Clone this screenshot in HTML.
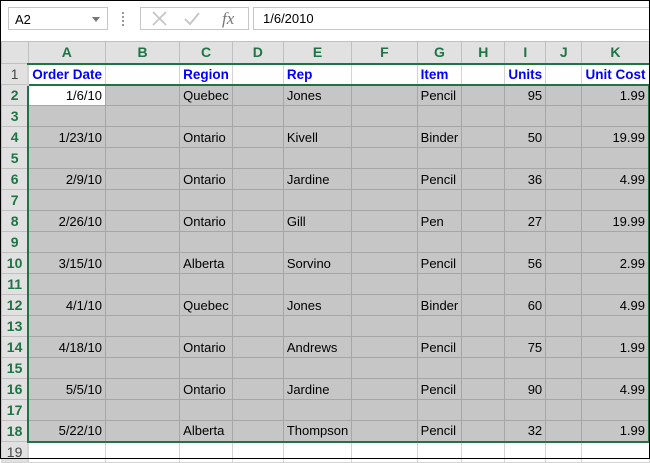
<!DOCTYPE html><html><head><style>
body{margin:0;width:650px;height:459px;overflow:hidden;background:#fff;font-family:"Liberation Sans",Arial,sans-serif;position:relative}
.frame{position:absolute;left:0;top:0;width:648px;height:457px;border:1px solid #000}
.fb{position:absolute;top:0;left:1px;width:648px;height:38px;background:#fff}
.nb{position:absolute;left:7px;top:7px;width:100px;height:23px;border:1px solid #c6c6c6;font-size:13px;line-height:23px;box-sizing:border-box;padding-left:6px}
.nb:after{content:"";position:absolute;right:7px;top:9px;border:4px solid transparent;border-top:5px solid #777}
.dots{position:absolute;left:121px;top:12px;width:2px;height:14px;background:repeating-linear-gradient(#999 0 2px,transparent 2px 4px)}
.ic{position:absolute;left:139px;top:7px;width:109px;height:23px;border:1px solid #c6c6c6;box-sizing:border-box}
.fx{position:absolute;left:252px;top:7px;width:398px;height:23px;border:1px solid #c6c6c6;box-sizing:border-box;font-size:13px;line-height:22px;padding-left:9px}
table{position:absolute;left:1px;top:41px;border-collapse:collapse;table-layout:fixed;font-size:13px}
td{height:20px;border:1px solid #a6a6a6;background:#c6c6c6;padding:0 3px;white-space:nowrap;overflow:hidden;box-sizing:border-box}
tr.h td{background:#e1e1e1;color:#217346;font-weight:bold;text-align:center;font-size:14px;border-color:#c0c0c0;border-bottom:2px solid #217346}
td.rh{background:#e1e1e1;color:#217346;font-weight:bold;text-align:center;font-size:14px;border-color:#c0c0c0;border-right:2px solid #217346;padding:0}
tr.r1 td{background:#fff;color:#0000ff;font-weight:bold;font-size:13.5px;border-color:#d4d4d4;border-bottom:2px solid #217346}
tr.r1 td.rh{background:#e1e1e1;color:#444;font-weight:normal;border-bottom:1px solid #c0c0c0}
tr.r19 td{background:#fff;border-color:#d4d4d4;border-top:2px solid #217346}
tr.r19 td.rh{background:#e1e1e1;color:#444;font-weight:normal;border-top:1px solid #c0c0c0}
.n{text-align:right}
td.act{background:#fff}
td.k{border-right:2px solid #217346}
</style></head><body>
<div class="fb">
<div class="nb">A2</div><div class="dots"></div>
<div class="ic"><svg width="107" height="21" style="position:absolute;left:0;top:0"><path d="M12 4l13 13M25 4L12 17" stroke="#c4c4c4" stroke-width="1.6" fill="none"/><path d="M44 11l5 5 9-11" stroke="#c4c4c4" stroke-width="1.8" fill="none"/><text x="81" y="16" font-family="Liberation Serif" font-style="italic" font-size="17" fill="#777">fx</text></svg></div>
<div class="fx">1/6/2010</div>
</div>
<table>
<colgroup><col style="width:27px"><col style="width:77px"><col style="width:76px"><col style="width:52px"><col style="width:52px"><col style="width:67px"><col style="width:67px"><col style="width:44px"><col style="width:44px"><col style="width:39px"><col style="width:37px"><col style="width:64px"></colgroup>
<tr class="h" style="height:22px"><td style="background:#e1e1e1;border-bottom:1px solid #c0c0c0"></td><td>A</td><td>B</td><td>C</td><td>D</td><td>E</td><td>F</td><td>G</td><td>H</td><td>I</td><td>J</td><td>K</td></tr>
<tr class="r1" style="height:21px"><td class="rh">1</td><td>Order Date</td><td></td><td>Region</td><td></td><td>Rep</td><td></td><td>Item</td><td></td><td>Units</td><td></td><td>Unit Cost</td></tr>
<tr style="height:21px"><td class="rh">2</td><td class="n act">1/6/10</td><td></td><td>Quebec</td><td></td><td>Jones</td><td></td><td>Pencil</td><td></td><td class="n">95</td><td></td><td class="n k">1.99</td></tr>
<tr style="height:21px"><td class="rh">3</td><td></td><td></td><td></td><td></td><td></td><td></td><td></td><td></td><td></td><td></td><td class="k"></td></tr>
<tr style="height:21px"><td class="rh">4</td><td class="n">1/23/10</td><td></td><td>Ontario</td><td></td><td>Kivell</td><td></td><td>Binder</td><td></td><td class="n">50</td><td></td><td class="n k">19.99</td></tr>
<tr style="height:21px"><td class="rh">5</td><td></td><td></td><td></td><td></td><td></td><td></td><td></td><td></td><td></td><td></td><td class="k"></td></tr>
<tr style="height:21px"><td class="rh">6</td><td class="n">2/9/10</td><td></td><td>Ontario</td><td></td><td>Jardine</td><td></td><td>Pencil</td><td></td><td class="n">36</td><td></td><td class="n k">4.99</td></tr>
<tr style="height:21px"><td class="rh">7</td><td></td><td></td><td></td><td></td><td></td><td></td><td></td><td></td><td></td><td></td><td class="k"></td></tr>
<tr style="height:21px"><td class="rh">8</td><td class="n">2/26/10</td><td></td><td>Ontario</td><td></td><td>Gill</td><td></td><td>Pen</td><td></td><td class="n">27</td><td></td><td class="n k">19.99</td></tr>
<tr style="height:21px"><td class="rh">9</td><td></td><td></td><td></td><td></td><td></td><td></td><td></td><td></td><td></td><td></td><td class="k"></td></tr>
<tr style="height:21px"><td class="rh">10</td><td class="n">3/15/10</td><td></td><td>Alberta</td><td></td><td>Sorvino</td><td></td><td>Pencil</td><td></td><td class="n">56</td><td></td><td class="n k">2.99</td></tr>
<tr style="height:21px"><td class="rh">11</td><td></td><td></td><td></td><td></td><td></td><td></td><td></td><td></td><td></td><td></td><td class="k"></td></tr>
<tr style="height:21px"><td class="rh">12</td><td class="n">4/1/10</td><td></td><td>Quebec</td><td></td><td>Jones</td><td></td><td>Binder</td><td></td><td class="n">60</td><td></td><td class="n k">4.99</td></tr>
<tr style="height:21px"><td class="rh">13</td><td></td><td></td><td></td><td></td><td></td><td></td><td></td><td></td><td></td><td></td><td class="k"></td></tr>
<tr style="height:21px"><td class="rh">14</td><td class="n">4/18/10</td><td></td><td>Ontario</td><td></td><td>Andrews</td><td></td><td>Pencil</td><td></td><td class="n">75</td><td></td><td class="n k">1.99</td></tr>
<tr style="height:21px"><td class="rh">15</td><td></td><td></td><td></td><td></td><td></td><td></td><td></td><td></td><td></td><td></td><td class="k"></td></tr>
<tr style="height:21px"><td class="rh">16</td><td class="n">5/5/10</td><td></td><td>Ontario</td><td></td><td>Jardine</td><td></td><td>Pencil</td><td></td><td class="n">90</td><td></td><td class="n k">4.99</td></tr>
<tr style="height:21px"><td class="rh">17</td><td></td><td></td><td></td><td></td><td></td><td></td><td></td><td></td><td></td><td></td><td class="k"></td></tr>
<tr style="height:21px"><td class="rh">18</td><td class="n">5/22/10</td><td></td><td>Alberta</td><td></td><td>Thompson</td><td></td><td>Pencil</td><td></td><td class="n">32</td><td></td><td class="n k">1.99</td></tr>
<tr class="r19" style="height:21px"><td class="rh">19</td><td></td><td></td><td></td><td></td><td></td><td></td><td></td><td></td><td></td><td></td><td></td></tr>
</table>
<div class="frame"></div>
</body></html>
